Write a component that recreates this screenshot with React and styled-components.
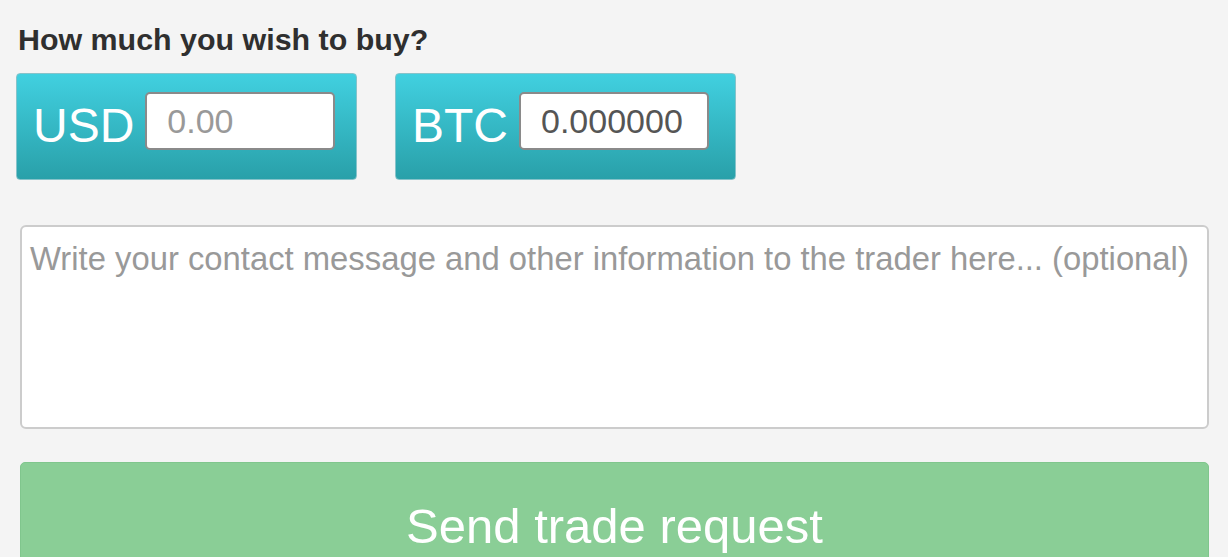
import React, { useState } from 'react'
import styled, { createGlobalStyle } from 'styled-components'

const GlobalStyle = createGlobalStyle`
  html, body {
    margin: 0;
    padding: 0;
    background: #f4f4f4;
    font-family: "Liberation Sans", Arial, Helvetica, sans-serif;
  }
`

const App = () => {
    const [usd, setUsd] = useState('')
    const [btc, setBtc] = useState('0.000000')
    const [message, setMessage] = useState('')

    return (
        <Container>
            <GlobalStyle />
            <Heading>How much you wish to buy?</Heading>
            <CurrencyRow>
                <CurrencyBox>
                    <CurrencyLabel>USD</CurrencyLabel>
                    <AmountInput
                        placeholder="0.00"
                        value={usd}
                        onChange={(e) => setUsd(e.target.value)}
                    />
                </CurrencyBox>
                <CurrencyBox>
                    <CurrencyLabel>BTC</CurrencyLabel>
                    <AmountInput
                        value={btc}
                        onChange={(e) => setBtc(e.target.value)}
                    />
                </CurrencyBox>
            </CurrencyRow>
            <MessageArea
                placeholder="Write your contact message and other information to the trader here... (optional)"
                value={message}
                onChange={(e) => setMessage(e.target.value)}
            />
            <SendButton type="button">Send trade request</SendButton>
        </Container>
    )
}

const Container = styled.div({
    padding: '0 19px 0 20px',
    display: 'flex',
    flexDirection: 'column',
    alignItems: 'stretch',
})

const Heading = styled.div({
    marginTop: '21px',
    marginLeft: '-2px',
    fontSize: '30.4px',
    lineHeight: '36px',
    fontWeight: 700,
    color: '#2f2f2f',
})

const CurrencyRow = styled.div({
    display: 'flex',
    gap: '38px',
    marginTop: '16px',
    marginLeft: '-4px',
})

const CurrencyBox = styled.div({
    boxSizing: 'border-box',
    width: '341px',
    height: '107px',
    display: 'flex',
    alignItems: 'flex-start',
    gap: '11px',
    padding: '18px 16px 0',
    background: 'linear-gradient(to bottom, #41d0e0 0%, #29a0a9 100%)',
    border: '1px solid #86c3ca',
    borderRadius: '4px',
})

const CurrencyLabel = styled.span({
    fontSize: '48px',
    lineHeight: '58px',
    paddingTop: '5px',
    color: '#ffffff',
})

const AmountInput = styled.input({
    boxSizing: 'border-box',
    width: '190px',
    height: '58px',
    padding: '0 20px',
    border: '2px solid #8a8a8a',
    borderRadius: '5px',
    background: '#ffffff',
    fontFamily: 'inherit',
    fontSize: '34px',
    color: '#555555',
    outline: 'none',
    '&::placeholder': {
        color: '#999999',
        opacity: 1,
    },
})

const MessageArea = styled.textarea({
    boxSizing: 'border-box',
    height: '204px',
    marginTop: '45px',
    padding: '11px 8px 9px',
    border: '2px solid #cccccc',
    borderRadius: '6px',
    background: '#ffffff',
    fontFamily: 'inherit',
    fontSize: '32.8px',
    lineHeight: '1.3',
    color: '#555555',
    resize: 'none',
    outline: 'none',
    '&::placeholder': {
        color: '#999999',
        opacity: 1,
    },
})

const SendButton = styled.button({
    marginTop: '33px',
    padding: '34px 0',
    border: '1px solid #80c68d',
    borderRadius: '5px',
    background: '#8ace96',
    fontFamily: 'inherit',
    fontSize: '49px',
    lineHeight: '1.2',
    color: '#ffffff',
    cursor: 'pointer',
})

export default App
